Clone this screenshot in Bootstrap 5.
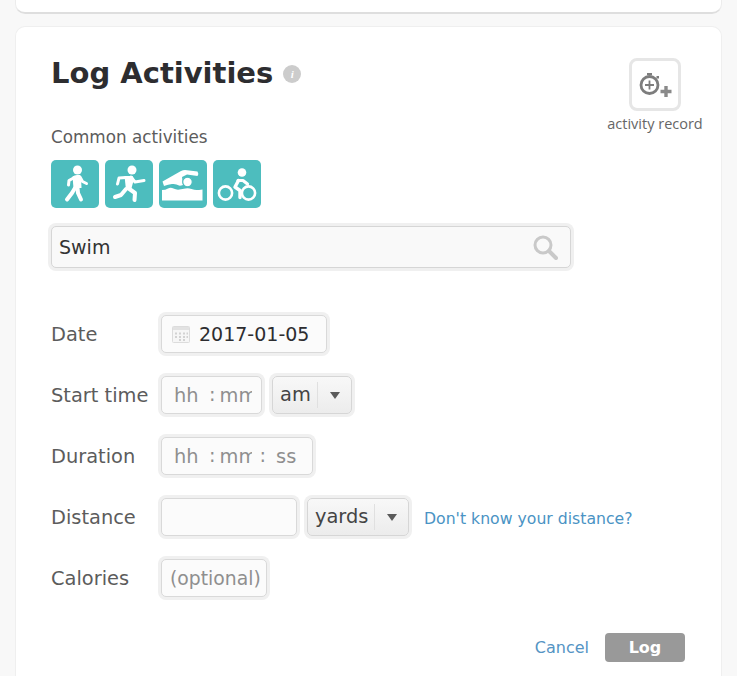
<!DOCTYPE html>
<html lang="en">
<head>
  <meta charset="UTF-8">
  <meta name="viewport" content="width=device-width, initial-scale=1.0">
  <title>Log Activities</title>
  <link href="https://cdn.jsdelivr.net/npm/bootstrap@5.3.1/dist/css/bootstrap.min.css" rel="stylesheet">
  <style>
    html, body { height: 676px; overflow: hidden; }
    body {
      background: #f8f8f8;
      font-family: "DejaVu Sans", sans-serif;
      color: #5c5c5c;
      padding: 0 15px;
    }
    .top-panel {
      height: 14px;
      background: #fff;
      border: 1px solid #ececec;
      border-top: 0;
      border-bottom: 2px solid #dedede;
      border-radius: 0 0 10px 10px;
      margin-bottom: 12px;
    }
    .log-panel {
      position: relative;
      height: 650px;
      background: #fff;
      border: 1px solid #efefef;
      border-bottom: 0;
      border-radius: 10px 10px 0 0;
      padding: 22px 36px 0 35px;
    }
    .log-title { font-size: 29px; font-weight: 700; color: #2d2d30; margin: 0; line-height: 48px; }
    .info-dot {
      width: 18px; height: 18px; border-radius: 50%;
      background: #cccccc; color: #fff;
      font: italic 700 11px/18px "Liberation Serif", serif;
      text-align: center;
      margin-left: 10px;
      margin-top: 2px;
    }
    .record-box { position: absolute; top: 31px; right: 16px; width: 100px; text-align: center; }
    .record-btn {
      width: 52px; height: 53px;
      margin: 0 auto 5px;
      background: #fff;
      border: 3px solid #e6e6e6;
      border-radius: 8px;
    }
    .record-label { font: 14.500px/16px "Open Sans", sans-serif; color: #666; white-space: nowrap; margin-left: -5px; margin-right: -5px; }
    .common-label { font-size: 16.800px; line-height: 20px; margin-top: 30px; margin-bottom: 13px; }
    .activity-tile { width: 48px; height: 48px; background: #4dbdbe; border-radius: 5px; }
    .icon-row { gap: 6px; }
    .search-wrap {
      width: 520px; height: 42px;
      margin-top: 18px; margin-bottom: 47px;
      background: #f9f9f9;
      border: 1px solid #d6d6d6;
      border-radius: 5px;
      box-shadow: 0 0 0 3px #f0f0f0;
      padding: 0 12px 0 7px;
    }
    .search-wrap input {
      flex: 1; min-width: 0;
      border: 0; outline: 0; padding: 0; background: transparent;
      font-size: 19px; color: #333;
    }
    .form-line { height: 38px; margin-bottom: 23px; }
    .line-label { width: 110px; flex: none; font-size: 19.400px; line-height: 38px; margin-top: 2px; }
    .field-box {
      height: 38px;
      background: #fbfbfb;
      border: 1px solid #d9d9d9;
      border-radius: 5px;
      box-shadow: 0 0 0 3px #f0f0f0;
      font-size: 19px;
      overflow: hidden;
    }
    .field-box input {
      border: 0; outline: 0; padding: 0; background: transparent;
      font-size: 19.400px; height: 36px; color: #333;
    }
    .field-box input::placeholder { color: #8f8f8f; opacity: 1; }
    .time-sep { color: #8f8f8f; font-size: 19.400px; }
    .date-box { width: 166px; padding-left: 9px; color: #2d2d30; }
    .date-box svg { margin-right: 8px; }
    .start-box { width: 101px; padding-left: 12px; }
    .duration-box { width: 152px; padding-left: 12px; }
    .distance-box { width: 136px; }
    .calories-box { width: 106px; padding-left: 8px; }
    .calories-box input { width: 96px; font-size: 18.800px; }
    .hh-in { width: 35px; }
    .mm-in { width: 32px; margin-left: 4px; }
    .ss-sep { margin-left: 8px; }
    .ss-in { width: 32px; margin-left: 10px; }
    .unit-select {
      height: 38px;
      background: linear-gradient(#f8f8f8, #ececec);
      border: 1px solid #d6d6d6;
      border-radius: 5px;
      box-shadow: 0 0 0 3px #f0f0f0;
      font-size: 19.400px;
      color: #444;
      padding-left: 7px;
      margin-left: 10px;
    }
    .am-select { width: 80px; }
    .yards-select { width: 102px; }
    .unit-select .unit-rule { width: 1px; height: 26px; background: #e0e0e0; margin-left: auto; }
    .unit-select .unit-caret {
      width: 0; height: 0;
      border-left: 5px solid transparent;
      border-right: 5px solid transparent;
      border-top: 7px solid #5a5a5a;
      margin: 1px 11px 0 12px;
    }
    .know-link { font-size: 15.700px; color: #4a93c4; text-decoration: none; margin-left: 15px; margin-top: 3px; }
    .form-actions { margin-top: 36px; }
    .cancel-link { font-size: 16px; color: #5594c4; text-decoration: none; margin-right: 16px; }
    .log-btn {
      width: 80px; height: 29px; padding: 0;
      background: #999; border: 0; border-radius: 4px;
      color: #fff; font-size: 16px; font-weight: 700; line-height: 29px;
    }
  </style>
</head>
<body>
  <div class="top-panel"></div>

  <div class="log-panel">
    <div class="d-flex align-items-center">
      <h1 class="log-title">Log Activities</h1>
      <div class="info-dot">i</div>
    </div>

    <div class="record-box">
      <div class="record-btn d-flex align-items-center justify-content-center">
        <svg width="36" height="30" viewBox="0 0 36 30">
          <circle cx="12.500" cy="15" r="8.500" fill="none" stroke="#7d7d7d" stroke-width="2.800"/>
          <rect x="10" y="3" width="5" height="2.400" fill="#7d7d7d"/>
          <rect x="19.500" y="6" width="2.500" height="2.500" fill="#7d7d7d"/>
          <path d="M12.500 10.500v9M8 15h9" stroke="#7d7d7d" stroke-width="1.800"/>
          <path d="M29 16v11M23.500 21.500h11" stroke="#8a8a8a" stroke-width="3.400"/>
        </svg>
      </div>
      <div class="record-label">activity record</div>
    </div>

    <div class="common-label">Common activities</div>
    <div class="d-flex icon-row">
      <div class="activity-tile">
        <svg width="48" height="48" viewBox="0 0 48 48">
          <circle cx="26.500" cy="10" r="4.500" fill="#fff"/>
          <path d="M21.500 16.500q2-1.500 4.500-1.500h3l1 2 .5 11h-8z" fill="#fff"/>
          <g fill="none" stroke="#fff" stroke-linecap="round" stroke-linejoin="round">
            <path d="M22.500 18l-4.500 2.500-.5 4.500" stroke-width="3"/>
            <path d="M29 17l2.500 4.500 4 2" stroke-width="3"/>
            <path d="M24 28l-3 5-5 6.500" stroke-width="4"/>
            <path d="M26.500 28l.5 5 3 6.500" stroke-width="4"/>
          </g>
        </svg>
      </div>
      <div class="activity-tile">
        <svg width="48" height="48" viewBox="0 0 48 48">
          <circle cx="27" cy="10" r="4.500" fill="#fff"/>
          <path d="M19.500 16h8l1.500 3-3 11h-5z" fill="#fff"/>
          <g fill="none" stroke="#fff" stroke-linecap="round" stroke-linejoin="round">
            <path d="M21 17.500l-7 .5-1.500 6" stroke-width="3"/>
            <path d="M26 17l4 5 9-1.500" stroke-width="3"/>
            <path d="M21 29l-5 6-6 2" stroke-width="4"/>
            <path d="M23 28l7 5-.5 7" stroke-width="4"/>
          </g>
        </svg>
      </div>
      <div class="activity-tile">
        <svg width="48" height="48" viewBox="0 0 48 48" fill="#fff">
          <path d="M38.500 11.500q1.500 2 0 4.500l-10.500-1.500-5 2.500 1 8q-3 1-4 .5-3-2-7-1.500t-8 2l-1.500-4.500 18.500-10.500q2-1 4-1z"/>
          <circle cx="28.500" cy="22" r="4.800" stroke="#4dbdbe" stroke-width="1.200"/>
          <path d="M3 30q3.500 0 6-1.500t5.500 0 6 1 6-1 6 .5 5 1 6-.5v11h-40.500z"/>
        </svg>
      </div>
      <div class="activity-tile">
        <svg width="48" height="48" viewBox="0 0 48 48">
          <circle cx="29" cy="12.500" r="4.300" fill="#fff"/>
          <g fill="none" stroke="#fff" stroke-linecap="round" stroke-linejoin="round">
            <path d="M25 20.500h5l4.500 3.500" stroke-width="3.200"/>
            <path d="M25.500 20.500l-3.500 6.500 5 3.500v7" stroke-width="3.400"/>
          </g>
          <circle cx="12.500" cy="33" r="6.600" fill="none" stroke="#fff" stroke-width="2.600"/>
          <circle cx="35.500" cy="33" r="6.600" fill="none" stroke="#fff" stroke-width="2.600"/>
        </svg>
      </div>
    </div>

    <div class="search-wrap d-flex align-items-center">
      <input type="text" value="Swim">
      <svg width="26" height="26" viewBox="0 0 26 26">
        <circle cx="11" cy="11" r="8" fill="none" stroke="#c9c9c9" stroke-width="3"/>
        <path d="M17 17l7 7" stroke="#c9c9c9" stroke-width="4" stroke-linecap="round"/>
      </svg>
    </div>

    <div class="form-line d-flex align-items-center">
      <div class="line-label">Date</div>
      <div class="field-box date-box d-flex align-items-center">
        <svg width="20" height="20" viewBox="0 0 20 20">
          <rect x="1.500" y="2.500" width="17" height="16" rx="1" fill="#f6f6f6" stroke="#dcdcdc"/>
          <rect x="2" y="3" width="16" height="3" fill="#e2e2e2"/>
          <path d="M4 8.500h2v2h-2zM8 8.500h2v2h-2zM12 8.500h2v2h-2zM15.500 8.500h1.500v2h-1.500zM4 12h2v2h-2zM8 12h2v2h-2zM12 12h2v2h-2zM15.500 12h1.500v2h-1.500zM8 15h2v2h-2zM12 15h2v2h-2z" fill="#d2d2d2"/>
        </svg>
        <span>2017-01-05</span>
      </div>
    </div>

    <div class="form-line d-flex align-items-center">
      <div class="line-label">Start time</div>
      <div class="field-box start-box d-flex align-items-center">
        <input class="hh-in" placeholder="hh"><span class="time-sep">:</span><input class="mm-in" placeholder="mm">
      </div>
      <div class="unit-select am-select d-flex align-items-center">
        <span>am</span><span class="unit-rule"></span><span class="unit-caret"></span>
      </div>
    </div>

    <div class="form-line d-flex align-items-center">
      <div class="line-label">Duration</div>
      <div class="field-box duration-box d-flex align-items-center">
        <input class="hh-in" placeholder="hh"><span class="time-sep">:</span><input class="mm-in" placeholder="mm"><span class="time-sep ss-sep">:</span><input class="ss-in" placeholder="ss">
      </div>
    </div>

    <div class="form-line d-flex align-items-center">
      <div class="line-label">Distance</div>
      <div class="field-box distance-box"></div>
      <div class="unit-select yards-select d-flex align-items-center">
        <span>yards</span><span class="unit-rule"></span><span class="unit-caret"></span>
      </div>
      <a href="#" class="know-link">Don't know your distance?</a>
    </div>

    <div class="form-line d-flex align-items-center">
      <div class="line-label">Calories</div>
      <div class="field-box calories-box d-flex align-items-center">
        <input placeholder="(optional)">
      </div>
    </div>

    <div class="form-actions d-flex justify-content-end align-items-center">
      <a href="#" class="cancel-link">Cancel</a>
      <button type="button" class="btn log-btn">Log</button>
    </div>
  </div>

  <script src="https://cdn.jsdelivr.net/npm/bootstrap@5.3.1/dist/js/bootstrap.bundle.min.js"></script>
</body>
</html>
